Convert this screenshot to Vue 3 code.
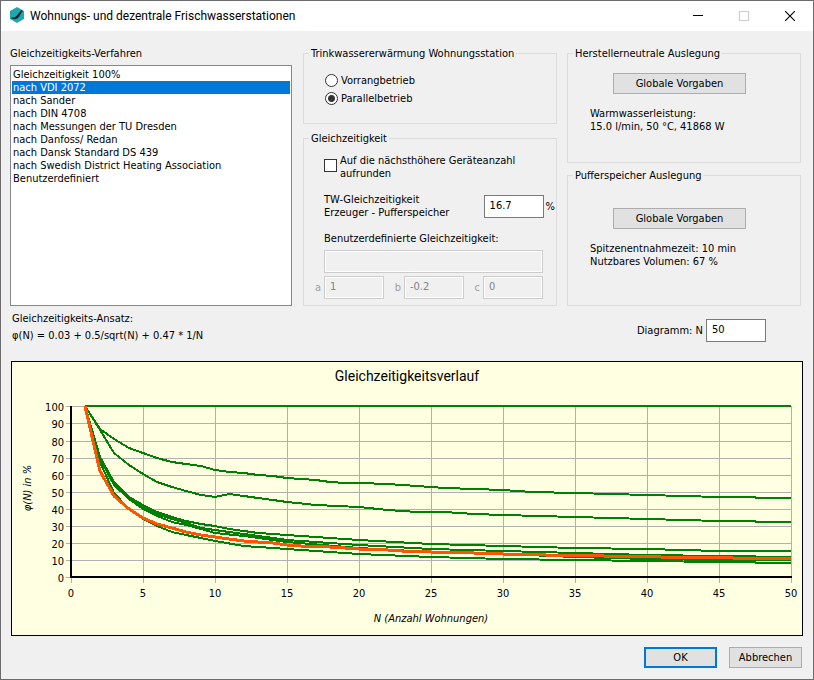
<script setup>
import { computed, ref } from 'vue'

const methods = [
  'Gleichzeitigkeit 100%',
  'nach VDI 2072',
  'nach Sander',
  'nach DIN 4708',
  'nach Messungen der TU Dresden',
  'nach Danfoss/ Redan',
  'nach Dansk Standard DS 439',
  'nach Swedish District Heating Association',
  'Benutzerdefiniert',
]
const method = ref(methods[1])
const mode = ref('parallel')
const roundUp = ref(false)
const share = ref('16.7')
const count = ref('50')

// Plot area in chart units
const left = 60
const bottom = 216
const sx = 14.4
const sy = 1.706
const px = (n) => Math.round(left + n * sx)
const py = (p) => Math.round(bottom - p * sy)

const xTicks = [0, 5, 10, 15, 20, 25, 30, 35, 40, 45, 50]
const yTicks = [0, 10, 20, 30, 40, 50, 60, 70, 80, 90, 100]

const series = [
  [[1, 100], [50, 100]],
  [[1, 100], [2, 86.7], [3, 80.7], [4, 75.8], [5, 72.5], [6, 70], [7, 67.6], [8, 66], [9, 64.8], [10, 63], [11, 61.7], [12, 61], [13, 60], [14, 59], [15, 58.2], [16, 57.6], [17, 56.8], [18, 55.8], [19, 55.2], [20, 55], [22, 54.3], [24, 53.1], [26, 52.4], [28, 51.5], [30, 51], [32, 50], [35, 49.4], [40, 48.2], [45, 46.9], [50, 46.2]],
  [[1, 100], [2, 86], [3, 72.8], [4, 65.4], [5, 60.2], [6, 55.9], [7, 52.9], [8, 50.4], [9, 48.2], [10, 46.9], [11, 48.4], [12, 47.5], [13, 46.3], [14, 45.1], [15, 43.7], [17, 42.4], [20, 40.8], [22, 39.5], [24, 38.3], [26, 38], [28, 37.2], [30, 36.5], [35, 35.2], [40, 34.2], [45, 33], [50, 32.2]],
  [[1, 100], [2, 70.5], [3, 55.5], [4, 47], [5, 42], [6, 37.9], [7, 35], [8, 32.8], [9, 30.9], [10, 29.7], [11, 28], [12, 26.8], [13, 26], [14, 25], [15, 24.4], [20, 21.5], [25, 19.3], [30, 18], [35, 17], [40, 16.2], [45, 15.4], [50, 15.2]],
  [[1, 100], [2, 70], [3, 55], [4, 46.3], [5, 40.8], [6, 36.7], [7, 33.8], [8, 31.5], [9, 28.9], [10, 27.3], [11, 26.2], [12, 25], [14, 22.7], [15, 21.5], [20, 18.6], [25, 16.2], [30, 15.1], [35, 13.8], [40, 12.8], [45, 12.1], [50, 11.7]],
  [[1, 100], [2, 69], [3, 54], [4, 45.5], [5, 39.8], [6, 35.5], [7, 32.4], [8, 30.3], [9, 27.9], [10, 25.8], [12, 23.8], [15, 20.6], [20, 16.8], [25, 14.8], [30, 13.2], [35, 11.8], [40, 10.6], [45, 10.1], [50, 9.9]],
  [[1, 100], [2, 67.5], [3, 49.4], [4, 39.8], [5, 34], [6, 29.7], [7, 26.6], [8, 24.4], [9, 22.7], [10, 20.9], [12, 18.4], [15, 16.3], [20, 13.5], [25, 11.9], [30, 10.7], [35, 10], [40, 9.4], [45, 8.9], [50, 8.2]],
]
const toPoints = (pts) => pts.map(([n, p]) => `${px(n)},${py(p)}`).join(' ')

const active = computed(() => {
  const pts = []
  for (let n = 1; n <= 50; n++) pts.push([n, 100 * (0.03 + 0.5 / Math.sqrt(n) + 0.47 / n)])
  return toPoints(pts)
})
</script>

<template>
  <div class="window">
    <header class="titlebar">
      <svg class="logo" viewBox="0 0 16 18" aria-hidden="true">
        <path d="M8 1 L15 5 V13 L8 17 L1 13 V5 Z" fill="#20a7ae" />
        <path d="M12.6 4.2 L13.2 4.7 L10.4 9.6 C9.4 12.6 5.4 13.6 2.6 12 C5 12 6.4 11.6 7.6 10.2 C8.8 9.4 10.6 6.4 12.6 4.2 Z" fill="#101820" stroke="#101820" stroke-width=".7" />
      </svg>
      <h1>Wohnungs- und dezentrale Frischwasserstationen</h1>
      <button class="caption" type="button" aria-label="Minimieren">
        <svg viewBox="0 0 10 10"><path d="M0 4.5H10" stroke="#000" /></svg>
      </button>
      <button class="caption" type="button" aria-label="Maximieren" disabled>
        <svg viewBox="0 0 10 10"><rect x=".5" y=".5" width="9" height="9" fill="none" stroke="#ccc" /></svg>
      </button>
      <button class="caption" type="button" aria-label="Schließen">
        <svg viewBox="0 0 10 10"><path d="M0 0L10 10M10 0L0 10" stroke="#000" stroke-width="1.1" /></svg>
      </button>
    </header>

    <main>
      <div class="columns">
        <div class="methods">
          <label for="methods">Gleichzeitigkeits-Verfahren</label>
          <select id="methods" v-model="method" size="9">
            <option v-for="m in methods" :key="m" :value="m">{{ m }}</option>
          </select>
        </div>

        <div class="groups middle">
          <fieldset>
            <legend>Trinkwassererwärmung Wohnungsstation</legend>
            <div class="modes">
              <label><input v-model="mode" type="radio" name="mode" value="vorrang" />Vorrangbetrieb</label>
              <label><input v-model="mode" type="radio" name="mode" value="parallel" />Parallelbetrieb</label>
            </div>
          </fieldset>
          <fieldset class="last">
            <legend>Gleichzeitigkeit</legend>
            <div class="settings">
              <label class="round"><input v-model="roundUp" type="checkbox" /><span>Auf die nächsthöhere Geräteanzahl<br />aufrunden</span></label>
              <div class="share">
                <label for="share">TW-Gleichzeitigkeit<br />Erzeuger - Pufferspeicher</label>
                <input id="share" v-model="share" class="field" type="text" />
                <span>%</span>
              </div>
              <div class="custom">
                <label for="custom">Benutzerdefinierte Gleichzeitigkeit:</label>
                <input id="custom" class="field wide" type="text" disabled />
              </div>
              <div class="params">
                <label>a<input class="field" type="text" value="1" disabled /></label>
                <label>b<input class="field" type="text" value="-0.2" disabled /></label>
                <label>c<input class="field" type="text" value="0" disabled /></label>
              </div>
            </div>
          </fieldset>
        </div>

        <div class="groups right">
          <fieldset>
            <legend>Herstellerneutrale Auslegung</legend>
            <div class="defaults">
              <button class="btn" type="button">Globale Vorgaben</button>
              <p>Warmwasserleistung:<br />15.0 l/min, 50 °C, 41868 W</p>
            </div>
          </fieldset>
          <fieldset class="last">
            <legend>Pufferspeicher Auslegung</legend>
            <div class="defaults buffer">
              <button class="btn" type="button">Globale Vorgaben</button>
              <p>Spitzenentnahmezeit: 10 min<br />Nutzbares Volumen: 67 %</p>
            </div>
          </fieldset>
        </div>
      </div>

      <div class="info">
        <div class="formula">
          <p>Gleichzeitigkeits-Ansatz:</p>
          <p>φ(N) = 0.03 + 0.5/sqrt(N) + 0.47 * 1/N</p>
        </div>
        <label class="count">Diagramm: N<input v-model="count" class="field" type="text" /></label>
      </div>

      <svg class="chart" viewBox="0 0 792 275" role="img" aria-label="Gleichzeitigkeitsverlauf">
        <rect x=".5" y=".5" width="791" height="274" fill="#ffffe1" stroke="#000" />
        <text class="heading" x="396" y="20" text-anchor="middle">Gleichzeitigkeitsverlauf</text>
        <g stroke="#b0b0b0" shape-rendering="crispEdges">
          <line v-for="p in yTicks" :key="p" :x1="left - 5" :x2="px(50)" :y1="py(p) + 0.5" :y2="py(p) + 0.5" />
          <line v-for="n in xTicks" :key="n" :x1="px(n) + 0.5" :x2="px(n) + 0.5" :y1="py(100)" :y2="bottom + 6" />
        </g>
        <path :d="`M${left} ${py(100)}V${bottom}H${px(50) + 1}`" fill="none" stroke="#000" stroke-width="2" shape-rendering="crispEdges" />
        <g fill="none" stroke="#008000" stroke-width="2" shape-rendering="crispEdges">
          <polyline v-for="(s, i) in series" :key="i" :points="toPoints(s)" />
        </g>
        <polyline :points="active" fill="none" stroke="#ff5500" stroke-width="3" shape-rendering="crispEdges" />
        <text v-for="p in yTicks" :key="'y' + p" x="53" :y="py(p) + 5" text-anchor="end">{{ p }}</text>
        <text v-for="n in xTicks" :key="'x' + n" :x="px(n)" y="236" text-anchor="middle">{{ n }}</text>
        <text class="axis" x="420" y="261" text-anchor="middle">N (Anzahl Wohnungen)</text>
        <text class="axis" transform="translate(20 127) rotate(-90)" text-anchor="middle">φ(N) in %</text>
      </svg>

      <footer>
        <button class="btn primary" type="button">OK</button>
        <button class="btn" type="button">Abbrechen</button>
      </footer>
    </main>
  </div>
</template>

<style>
body {
  background: #f0f0f0;
}
</style>

<style scoped>
.window {
  box-sizing: border-box;
  min-height: 100vh;
  border: 1px solid #6d6a6d;
  background: #f0f0f0;
  color: #000;
  font: 11px/13px "DejaVu Sans Condensed", "DejaVu Sans", sans-serif;
}
.window * {
  box-sizing: border-box;
}
.titlebar {
  display: flex;
  align-items: stretch;
  height: 30px;
  padding-left: 8px;
  background: #fff;
}
.logo {
  width: 16px;
  height: 18px;
  margin-top: 5px;
}
h1 {
  flex: 1;
  margin: 0 0 0 5px;
  font: 12px/30px Roboto, "Noto Sans", sans-serif;
}
.caption {
  display: grid;
  place-items: center;
  width: 46px;
  padding: 0;
  border: 0;
  background: none;
}
.caption svg {
  width: 10px;
  height: 10px;
}
main {
  padding: 16px 10px 11px 9px;
}
.columns {
  display: grid;
  grid-template-columns: 283fr 254fr 234fr;
  column-gap: 10px;
  padding-right: 2px;
}
.methods {
  display: flex;
  flex-direction: column;
  gap: 5px;
  padding-right: 1px;
}
select {
  height: 241px;
  padding: 2px 1px;
  border: 1px solid #828790;
  border-radius: 0;
  outline: 0;
  background: #fff;
  font: inherit;
  overflow: hidden;
}
option {
  min-height: 13px;
  height: 13px;
  padding: 0 1px;
  color: #000;
  line-height: 13px;
}
option:checked {
  background: linear-gradient(#0078d7, #0078d7);
  -webkit-text-fill-color: #fff;
}
.groups {
  display: flex;
  flex-direction: column;
  gap: 8px;
}
.right {
  gap: 6px;
}
fieldset {
  min-width: 0;
  margin: 0;
  padding: 0;
  border: 1px solid #dcdcdc;
}
.last {
  flex: 1;
}
legend {
  margin-left: 5px;
  padding: 0 2px;
}
.modes {
  padding: 11px 20px 16px 21px;
}
.modes label {
  display: flex;
  align-items: center;
  gap: 3px;
  height: 18px;
}
input[type="radio"] {
  appearance: none;
  width: 13px;
  height: 13px;
  margin: 0;
  border: 1px solid #333;
  border-radius: 50%;
  background: #fff;
}
input[type="radio"]:checked {
  background: radial-gradient(circle, #333 3px, #fff 4px);
}
.settings {
  padding: 9px 1px 5px 11px;
}
.round {
  display: flex;
  gap: 3px;
  margin-left: 9px;
}
input[type="checkbox"] {
  appearance: none;
  flex: none;
  width: 13px;
  height: 13px;
  margin: 5px 0 0;
  border: 1px solid #333;
  background: #fff;
}
.share {
  display: flex;
  align-items: center;
  gap: 2px;
  margin: 13px 0 0 9px;
  white-space: nowrap;
}
.share label {
  flex: 1;
}
.field {
  width: 60px;
  height: 23px;
  margin: 0;
  padding: 0 5px 2px;
  border: 1px solid #7a7a7a;
  border-radius: 0;
  background: #fff;
  color: #000;
  font: inherit;
}
.field:disabled {
  border-color: #ccc;
  background: #f0f0f0;
  box-shadow: inset 0 0 0 1px #fff;
  color: #838383;
}
.custom {
  display: flex;
  flex-direction: column;
  gap: 5px;
  margin: 13px 12px 3px 9px;
}
.wide {
  width: 100%;
}
.params {
  display: flex;
  justify-content: space-between;
  margin-right: 12px;
  color: #a0a0a0;
}
.params label {
  display: flex;
  align-items: center;
  gap: 3px;
}
.btn {
  width: 73px;
  height: 21px;
  padding: 0;
  border: 1px solid #adadad;
  background: #e1e1e1;
  color: #000;
  font: inherit;
}
.primary {
  border: 2px solid #0078d7;
}
.defaults {
  padding: 13px 10px 29px 22px;
}
.defaults .btn {
  display: block;
  width: 133px;
  margin-left: 23px;
}
.buffer {
  padding-top: 26px;
}
p {
  margin: 0;
}
.defaults p {
  margin-top: 13px;
}
.info {
  display: flex;
  justify-content: space-between;
  align-items: flex-end;
  padding: 6px 37px 0 2px;
}
.formula {
  display: flex;
  flex-direction: column;
  gap: 4px;
}
.count {
  display: flex;
  align-items: center;
  gap: 3px;
}
.chart {
  display: block;
  width: calc(100% - 1px);
  margin: 19px 0 11px 1px;
}
.heading {
  font-family: Roboto, "Noto Sans", sans-serif;
  font-size: 14px;
}
.axis {
  font-style: italic;
}
footer {
  display: flex;
  justify-content: flex-end;
  gap: 12px;
  padding-right: 1px;
}
</style>
